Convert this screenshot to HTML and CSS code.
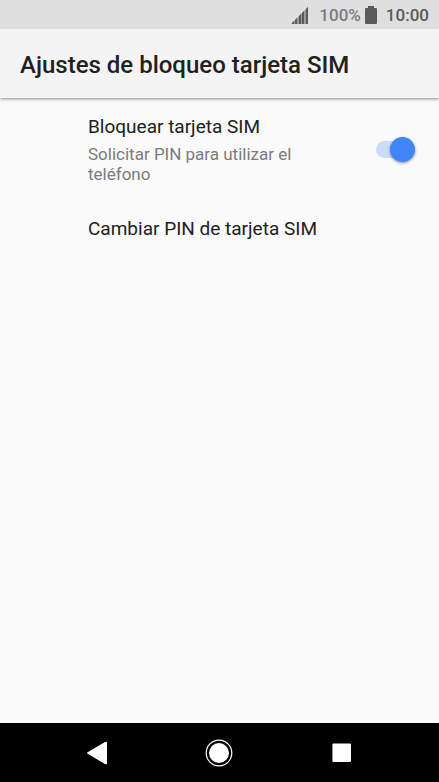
FILE: index.html
```
<!DOCTYPE html>
<html lang="es">
<head>
    <meta charset="UTF-8">
    <meta name="viewport" content="width=device-width, initial-scale=1.0">
    <title>Ajustes de bloqueo tarjeta SIM</title>
    <link rel="stylesheet" href="styles.css">
</head>
<body>
    <div class="status-bar">
        <svg class="signal" width="18" height="18" viewBox="0 0 18 18">
            <path d="M1 18v-1l2-2v3zM4 18v-4l2-2v6zM8 18v-8l2-2v10zM11 18V7l2-2v13zM15 18V3l2-2v17z"/>
            <path class="signal-base" d="M0 18L17 1v17z"/>
        </svg>
        <span class="battery-level">100%</span>
        <svg class="battery" width="12" height="18" viewBox="0 0 12 18">
            <path d="M3 0h6v2h2q1 0 1 1v14q0 1-1 1H1q-1 0-1-1V3q0-1 1-1h2z"/>
        </svg>
        <span class="clock">10:00</span>
    </div>

    <header class="app-bar">
        <h1>Ajustes de bloqueo tarjeta SIM</h1>
    </header>

    <main class="settings">
        <div class="setting">
            <label class="setting-text" for="lock-sim">
                <span class="setting-title">Bloquear tarjeta SIM</span>
                <span class="setting-summary">Solicitar PIN para utilizar el teléfono</span>
            </label>
            <input class="switch" type="checkbox" id="lock-sim" checked>
        </div>
        <button class="setting setting-button" type="button">
            <span class="setting-title">Cambiar PIN de tarjeta SIM</span>
        </button>
    </main>

    <nav class="nav-bar">
        <button type="button" aria-label="Atrás">
            <svg width="28" height="28" viewBox="0 0 28 28">
                <path d="M5 13L22 3q2-1 2 1v20q0 2-2 1L5 15q-2-1 0-2z"/>
            </svg>
        </button>
        <button type="button" aria-label="Inicio">
            <svg width="28" height="28" viewBox="0 0 28 28">
                <circle class="home-ring" cx="14" cy="14" r="12.8"/>
                <circle cx="14" cy="14" r="10"/>
            </svg>
        </button>
        <button type="button" aria-label="Recientes">
            <svg width="28" height="28" viewBox="0 0 28 28">
                <rect x="4.4" y="4.4" width="18.6" height="18.6" rx="1"/>
            </svg>
        </button>
    </nav>
</body>
</html>
```
FILE: styles.css
```
* {
    box-sizing: border-box;
}

body {
    display: flex;
    flex-direction: column;
    min-height: 100vh;
    margin: 0;
    background-color: #fafafa;
    color: #212121;
    font-family: Roboto, sans-serif;
}

button {
    padding: 0;
    border: 0;
    background: none;
    color: inherit;
    font-family: inherit;
}

.status-bar {
    display: flex;
    justify-content: flex-end;
    align-items: center;
    height: 29px;
    padding: 1px 10px 0;
    background-color: #dfdfdf;
    color: #5a5a5a;
    font-size: 17px;
    line-height: 20px;
}

.status-bar svg {
    fill: #5a5a5a;
}

.signal-base {
    opacity: 0.5;
}

.battery-level {
    margin: 0 4px 0 10px;
    color: #7c7c7c;
    font-weight: 500;
}

.clock {
    margin-left: 9px;
    font-weight: 500;
}

.app-bar {
    display: flex;
    align-items: center;
    height: 69px;
    padding: 2px 20px 0;
    background-color: #f4f4f4;
    box-shadow: 0 1px 3px rgba(0, 0, 0, 0.45);
    clip-path: inset(0 0 -6px);
}

h1 {
    margin: 0;
    font-size: 24px;
    font-weight: 500;
    line-height: 28px;
}

.settings {
    flex: 1;
}

.setting {
    display: flex;
    justify-content: space-between;
    align-items: center;
    width: 100%;
    padding: 16px 24px 14px 88px;
    text-align: left;
}

.setting-text {
    max-width: 224px;
}

.setting-title {
    display: block;
    font-size: 19px;
    line-height: 26px;
}

.setting-summary {
    display: block;
    margin-top: 4px;
    color: #7a7a7a;
    font-size: 17px;
    line-height: 20px;
}

.setting-button {
    padding-top: 18px;
}

.switch {
    appearance: none;
    position: relative;
    flex: none;
    width: 39px;
    height: 17px;
    margin: 0;
    border-radius: 9px;
    background-color: #d0d0d0;
}

.switch::before {
    content: "";
    position: absolute;
    top: -4px;
    left: 0;
    width: 25px;
    height: 25px;
    border-radius: 50%;
    background-color: #fafafa;
    box-shadow: 0 1px 3px rgba(0, 0, 0, 0.45);
}

.switch:checked {
    background-color: #cbdcfb;
}

.switch:checked::before {
    right: 0;
    left: auto;
    background-color: #4285f8;
}

.nav-bar {
    display: flex;
    height: 59px;
    padding: 0 36px;
    background-color: #000;
}

.nav-bar button {
    display: flex;
    flex: 1;
    justify-content: center;
    align-items: center;
}

.nav-bar svg {
    fill: #fff;
}

.nav-bar .home-ring {
    fill: none;
    stroke: #fff;
    stroke-width: 1.2;
}
```
